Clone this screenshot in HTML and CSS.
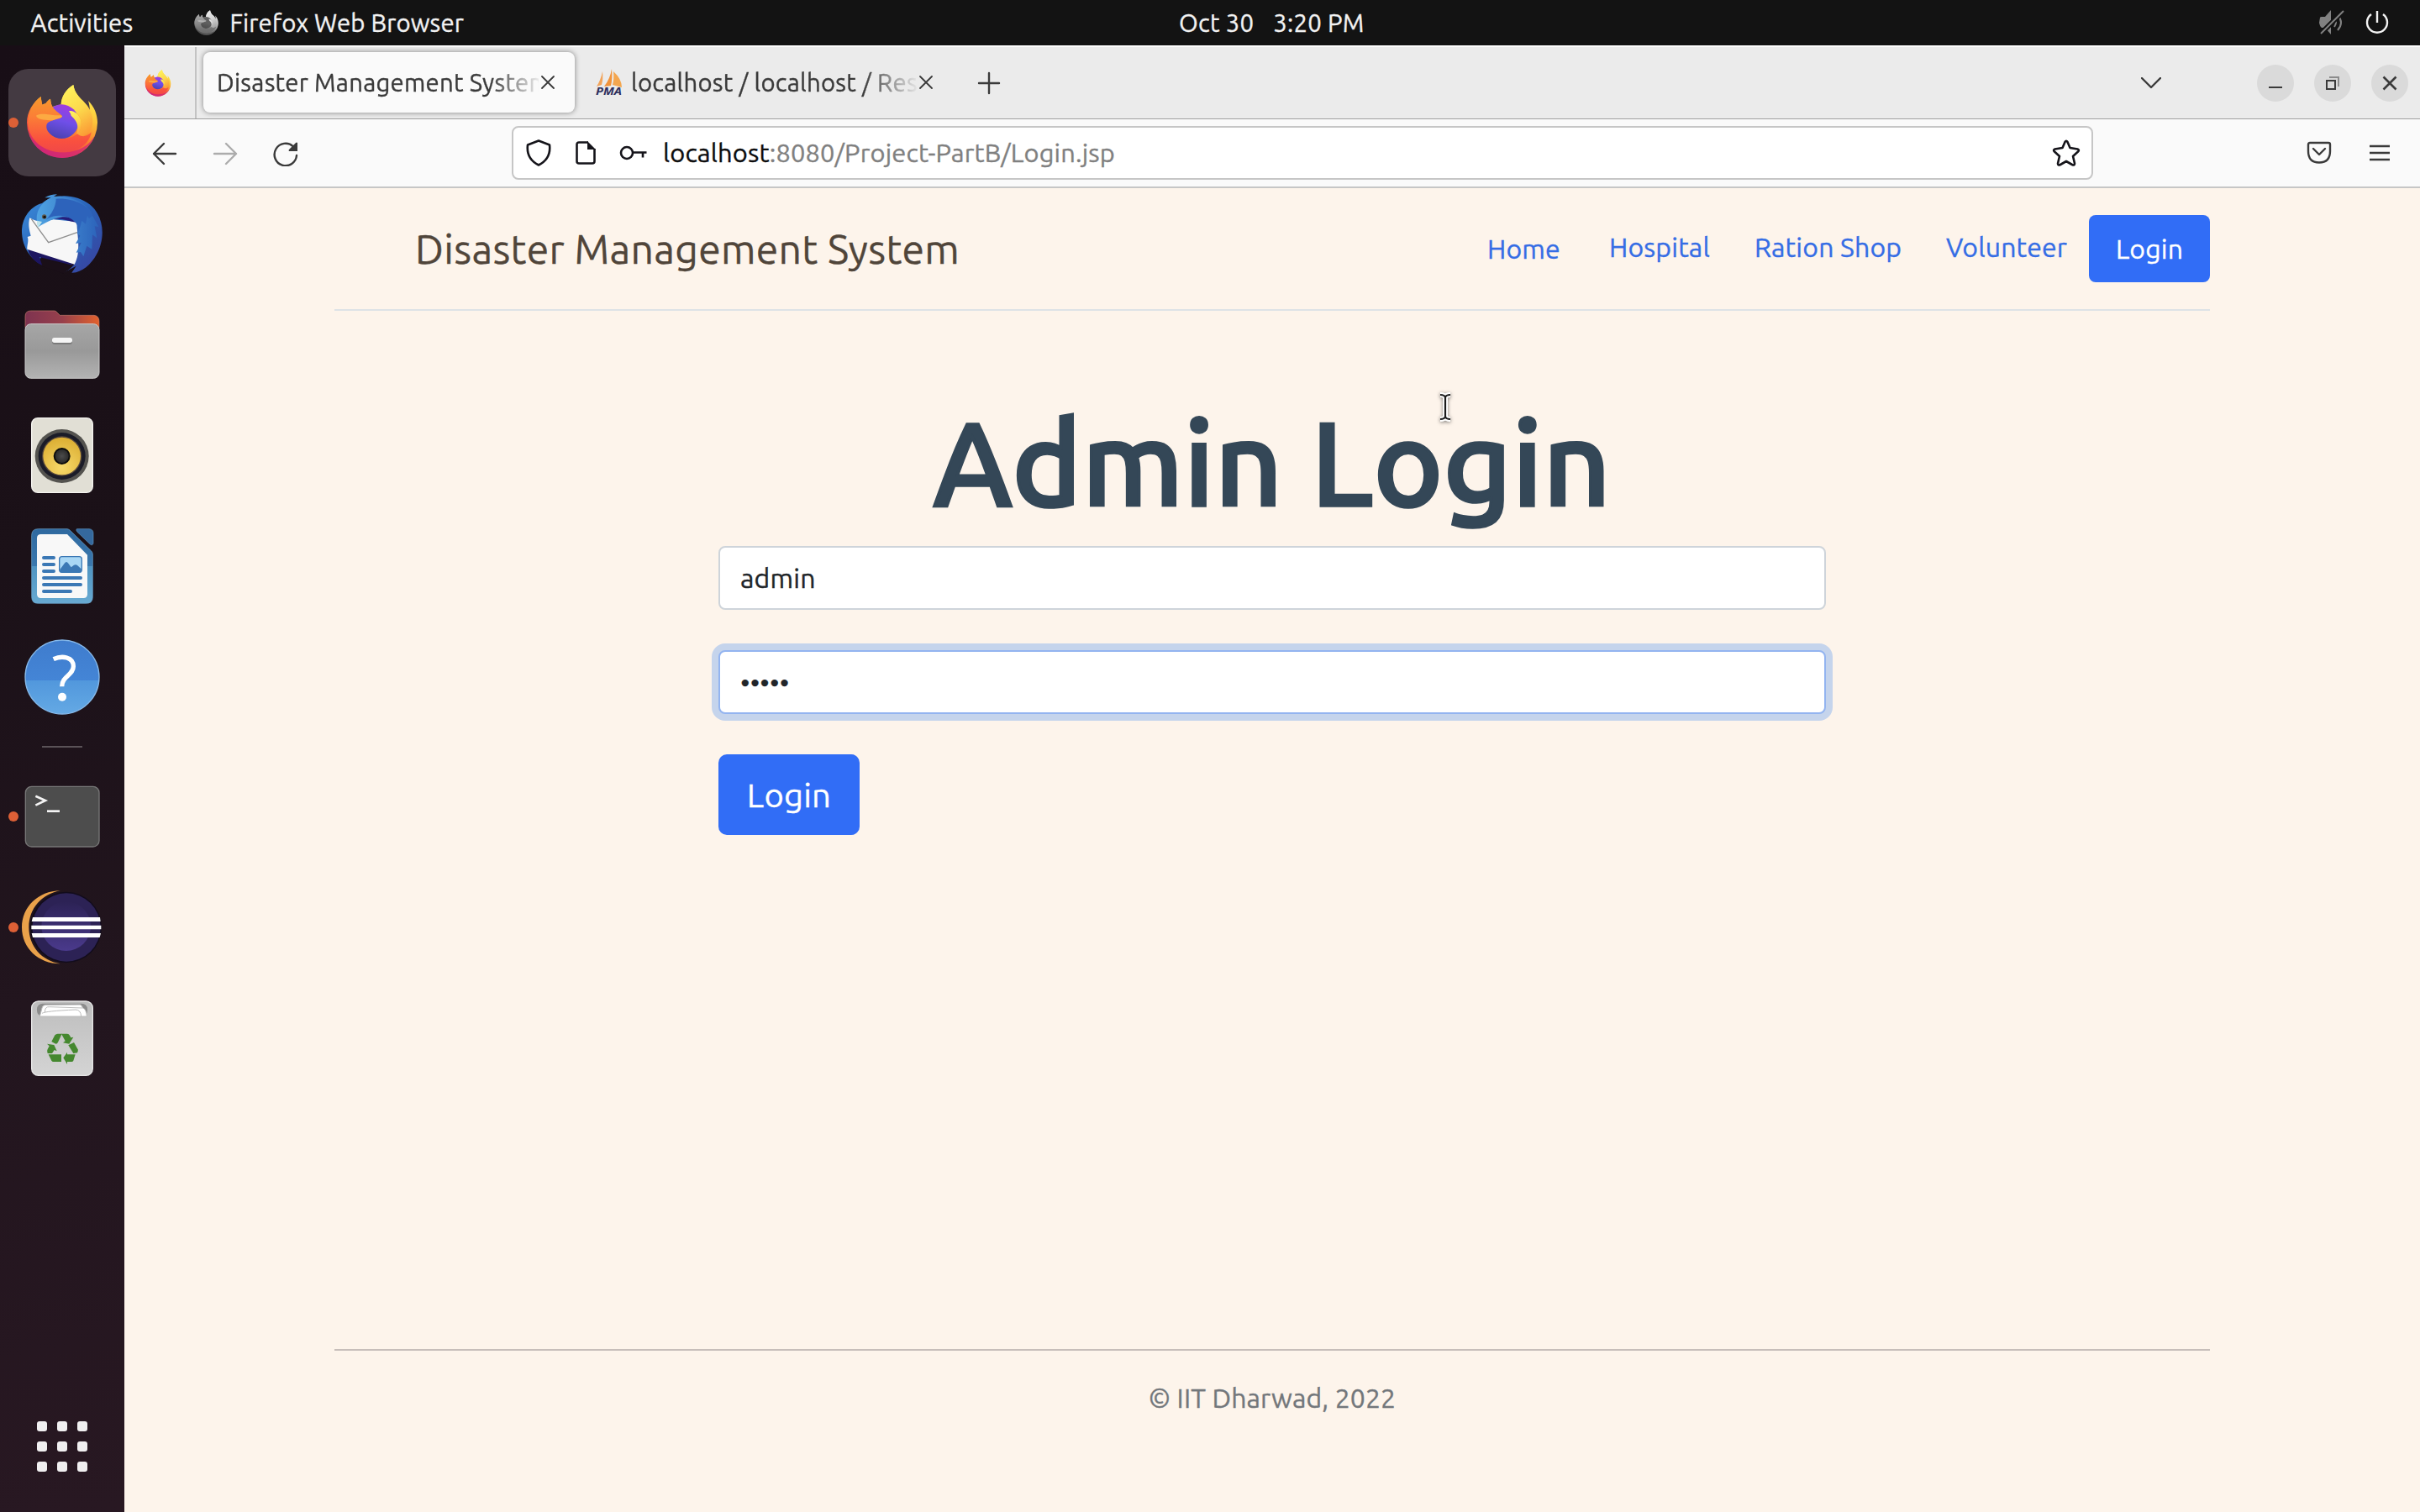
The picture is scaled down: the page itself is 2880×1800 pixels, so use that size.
FILE: index.html
```
<!DOCTYPE html>
<html lang="en">
<head>
<meta charset="utf-8">
<title>Disaster Management System</title>
<link rel="stylesheet" href="styles.css">
</head>
<body>
<svg class="defs" aria-hidden="true">
  <defs>
    <linearGradient id="fxBody" x1=".85" y1=".1" x2=".35" y2="1">
      <stop offset="0" stop-color="#fff04f"/><stop offset=".3" stop-color="#fcc43a"/><stop offset=".55" stop-color="#fb8430"/><stop offset=".78" stop-color="#f5483f"/><stop offset="1" stop-color="#c9217c"/>
    </linearGradient>
    <linearGradient id="fxFlame" x1=".3" y1="0" x2=".7" y2="1">
      <stop offset="0" stop-color="#fff25b"/><stop offset=".5" stop-color="#fcd94c"/><stop offset="1" stop-color="#fb9a35"/>
    </linearGradient>
    <linearGradient id="fxHead" x1="0" y1="0" x2="0" y2="1">
      <stop offset="0" stop-color="#f59a2b"/><stop offset=".35" stop-color="#fb7f36"/><stop offset=".8" stop-color="#f9503f"/><stop offset="1" stop-color="#f04848"/>
    </linearGradient>
    <linearGradient id="fxGlobe" x1=".7" y1="0" x2=".4" y2="1">
      <stop offset="0" stop-color="#a43be0"/><stop offset=".5" stop-color="#6f4fe8"/><stop offset="1" stop-color="#4a42b0"/>
    </linearGradient>
    <linearGradient id="tbBlue" x1="0" y1="0" x2="1" y2="1">
      <stop offset="0" stop-color="#3b8fdc"/><stop offset=".5" stop-color="#2a62b8"/><stop offset="1" stop-color="#3a3f9c"/>
    </linearGradient>
    <linearGradient id="tbHead" x1="0" y1="0" x2="1" y2="0">
      <stop offset="0" stop-color="#4fa3e2"/><stop offset="1" stop-color="#2c63ba"/>
    </linearGradient>
    <linearGradient id="folderBack" x1="0" y1="0" x2="1" y2="0">
      <stop offset="0" stop-color="#7e3350"/><stop offset=".5" stop-color="#97404c"/><stop offset="1" stop-color="#e2622e"/>
    </linearGradient>
    <linearGradient id="folderFront" x1="0" y1="0" x2="0" y2="1">
      <stop offset="0" stop-color="#a6a6a6"/><stop offset=".5" stop-color="#999"/><stop offset="1" stop-color="#b3b3b3"/>
    </linearGradient>
    <radialGradient id="cone" cx=".5" cy=".8" r=".8">
      <stop offset="0" stop-color="#f6d96a"/><stop offset="1" stop-color="#dcae32"/>
    </radialGradient>
    <radialGradient id="cap"><stop offset="0" stop-color="#4c4c4c"/><stop offset="1" stop-color="#2b2b2b"/></radialGradient>
    <linearGradient id="writer" x1="0" y1="0" x2="0" y2="1">
      <stop offset="0" stop-color="#2f699f"/><stop offset=".5" stop-color="#3a78ae"/><stop offset=".5" stop-color="#4f94c2"/><stop offset="1" stop-color="#68aad2"/>
    </linearGradient>
    <linearGradient id="help" x1="0" y1="0" x2="0" y2="1">
      <stop offset="0" stop-color="#3f7ccd"/><stop offset=".54" stop-color="#4485d6"/><stop offset=".54" stop-color="#5197dc"/><stop offset="1" stop-color="#64a9e4"/>
    </linearGradient>
    <linearGradient id="moon" x1="0" y1="0" x2="0" y2="1">
      <stop offset="0" stop-color="#2c2255"/><stop offset="1" stop-color="#4a3a8c"/>
    </linearGradient>
    <linearGradient id="trash" x1="0" y1="0" x2="0" y2="1">
      <stop offset="0" stop-color="#bdbdbd"/><stop offset="1" stop-color="#d4d4d4"/>
    </linearGradient>
    <symbol id="firefox" viewBox="94 92 256 264">
      <path fill="url(#fxBody)" d="M146 135C147 146 149 156 151 164Q157 161 163 160C167 153 173 147 180 143C181 154 183 164 187 171L218 163C219 136 234 110 262 93C266 121 281 135 296 150C309 163 318 174 320 184C321 172 318 160 315 150C337 171 348 200 348 228A126 126 0 0 1 96 228C96 190 118 155 146 135Z"/>
      <path fill="#d12a76" opacity=".75" d="M104 272A126 126 0 0 0 340 272C312 320 268 334 222 334C170 334 126 312 104 272Z"/>
      <path fill="url(#fxFlame)" d="M218 163C219 136 234 110 262 93C266 121 281 135 296 150C322 177 334 206 330 232C326 264 300 284 268 280C288 262 294 240 290 222C286 204 276 192 262 186L248 176Z"/>
      <circle cx="220" cy="224" r="61" fill="url(#fxGlobe)"/>
      <path fill="url(#fxFlame)" d="M246 187C262 183 277 195 285 211C296 235 290 264 268 279C279 258 280 241 272 225C266 213 258 208 254 203Q252 194 246 187Z"/>
      <path fill="url(#fxHead)" d="M146 135C147 146 149 156 151 164Q157 161 163 160C167 153 173 147 180 143C181 156 184 167 190 175C200 189 215 196 222 204C222 213 209 213 198 217C184 222 168 224 166 238C163 262 190 286 221 286C246 286 264 277 276 268C292 282 312 278 326 262C318 310 270 334 222 334C160 334 110 296 100 240C96 200 118 155 146 135Z"/>
      <path fill="#fcb144" opacity=".85" d="M129 203C142 194 166 198 190 201C204 203 218 200 222 205C220 212 207 213 194 218C178 222 160 218 146 216C136 213 131 209 129 203Z"/>
    </symbol>
  </defs>
</svg>

<div class="desktop">
  <header class="topbar">
    <span class="activities">Activities</span>
    <span class="app-menu">
      <svg class="app-icon"><use href="#firefox"/></svg>
      <span class="app-name">Firefox Web Browser</span>
    </span>
    <span class="clock"><span>Oct 30</span><span>3:20 PM</span></span>
    <span class="status">
      <svg width="30" height="30" viewBox="0 0 30 30" fill="none" stroke="#828282" stroke-width="2">
        <path fill="#828282" stroke="none" d="M1 9Q1 8 3 8H7L14 0V29L7 21H3Q1 20 0 15Z"/>
        <path d="M18 10Q22 14 18 20M22 6Q30 15 22 24"/>
        <path stroke="#131313" stroke-width="6" d="M2 28L29 1"/><path stroke-width="2" d="M2 28L29 1"/>
      </svg>
      <svg width="28" height="30" viewBox="0 0 28 30" fill="none" stroke="#f2f2f2" stroke-width="2.4">
        <path d="M7 5A12 12 0 1 0 21 5M14 1V15"/>
      </svg>
    </span>
  </header>

  <div class="workspace">
    <nav class="dock">
      <div class="dock-item active"><i class="running"></i>
        <svg viewBox="0 30 444 396"><use href="#firefox" x="94" y="92" width="256" height="264"/></svg></div>
      <div class="dock-item"><svg viewBox="0 426 444 396">
        <path fill="url(#tbBlue)" d="M150 516C190 480 270 480 320 520C372 562 378 640 344 700C325 735 290 766 256 764L272 740L225 764Q250 752 262 736L155 738C110 720 76 670 78 610C80 566 110 526 150 516Z"/>
        <path fill="#1a0f18" d="M140 728Q150 736 160 742L225 766Q250 752 266 734L200 712L150 700Z"/>
        <path fill="#1c1560" d="M100 680C104 705 130 732 155 738L140 708L262 738L220 690Z"/>
        <path fill="#1a0f18" d="M142 712L256 740Q240 758 225 766L152 742Z"/>
        <path fill="#f7f7f7" d="M106 568C140 590 160 578 190 574L274 582C276 640 290 690 266 734L97 680C96 665 104 650 98 636L110 632C104 610 100 590 106 568Z"/>
        <path fill="none" stroke="#8f8f8f" stroke-width="4" d="M112 572L173 656L276 620"/>
        <path fill="#251e7c" d="M182 574C214 552 260 556 272 584C246 582 220 566 182 574Z"/>
        <path fill="url(#tbHead)" d="M132 578C126 546 150 510 182 496L160 496Q180 484 204 484L192 492C250 486 320 520 330 560L352 600L338 598L346 640L330 628L328 680L310 668L298 706L288 690L272 692L290 656L270 660L286 632L276 624C290 590 260 558 216 566C180 574 160 586 138 600Z"/>
        <path fill="#2d63bb" d="M200 500C260 494 326 528 330 560L318 570L312 560L306 590L292 578L280 622C286 590 256 560 210 560C180 562 170 570 162 577C190 550 200 520 200 500Z"/>
        <path fill="#bfe3ea" d="M132 578L150 582L136 604Q130 592 132 578Z"/>
        <circle cx="158" cy="564" r="8" fill="#5d5647"/><circle cx="159" cy="565" r="5" fill="#111"/>
      </svg></div>
      <div class="dock-item"><svg viewBox="0 822 444 396">
        <path fill="url(#folderBack)" stroke="#c07a6a" stroke-width="2" d="M90 960V920Q90 900 110 900H194Q200 900 204 906L214 916H336Q354 918 354 938V960Z"/>
        <rect x="90" y="947" width="264" height="194" rx="20" fill="url(#folderFront)" stroke="#c9c9c9" stroke-width="3"/>
        <rect x="186" y="1000" width="72" height="20" rx="9" fill="#7a7a7a"/>
        <rect x="186" y="996" width="72" height="18" rx="8" fill="#f5f5f5"/>
      </svg></div>
      <div class="dock-item"><svg viewBox="0 18 444 396">
        <rect x="113" y="83" width="218" height="266" rx="22" fill="#e1dfd5" stroke="#f4f3ef" stroke-width="4"/>
        <circle cx="221" cy="219" r="96" fill="#54534f"/><circle cx="221" cy="219" r="84" fill="#1b1c28"/>
        <circle cx="221" cy="219" r="71" fill="#5a4a3c"/><circle cx="221" cy="219" r="67" fill="url(#cone)"/>
        <circle cx="221" cy="219" r="30" fill="#0b0b0b"/><circle cx="221" cy="219" r="24" fill="url(#cap)"/>
      </svg></div>
      <div class="dock-item"><svg viewBox="0 414 444 396">
        <path fill="url(#writer)" stroke="#6da6cf" stroke-width="2" d="M136 479H240Q246 480 250 484L326 558Q331 563 331 570V722Q331 745 308 745H136Q113 745 113 722V502Q113 479 136 479Z"/>
        <path fill="#35699e" stroke="#5b91bd" stroke-width="2" d="M274 479H318Q333 480 333 494V530Q331 540 322 534L276 490Q270 482 274 479Z"/>
        <path fill="#f8f8f8" d="M146 498H240L312 572V712Q312 726 298 726H146Q132 726 132 712V512Q132 498 146 498Z"/>
        <path stroke="#3b78b5" stroke-width="12" stroke-linecap="round" d="M156 582H192M156 606H192M156 630H192M156 654H288M156 678H288M156 702H252"/>
        <rect x="212" y="578" width="80" height="56" rx="9" fill="#a9d7f5" stroke="#3b78b5" stroke-width="4"/>
        <path fill="#3b78b5" d="M214 624L230 602Q237 592 244 602L254 616L264 608Q271 604 277 610L290 622V634H214Z"/>
      </svg></div>
      <div class="dock-item"><svg viewBox="0 810 444 396">
        <circle cx="222" cy="1008" r="132" fill="url(#help)" stroke="#86b9ea" stroke-width="4"/>
        <path fill="none" stroke="#fff" stroke-width="16" d="M191 944C222 930 262 936 262 970C262 1002 221 1004 221 1042"/>
        <circle cx="222" cy="1079" r="15" fill="#fff"/>
      </svg></div>
      <div class="dock-separator"></div>
      <div class="dock-item"><i class="running"></i><svg viewBox="0 108 444 396">
        <rect x="91" y="199" width="263" height="215" rx="22" fill="#4d4d4d" stroke="#777" stroke-width="4"/>
        <path fill="none" stroke="#f4f4f4" stroke-width="8" d="M127 233L162 249L127 266"/><path stroke="#f4f4f4" stroke-width="8" d="M168 287H213"/>
      </svg></div>
      <div class="dock-item"><i class="running"></i><svg viewBox="0 504 444 396">
        <path fill="#e9a14a" d="M216 571C135 572 78 630 78 702S135 832 216 832C150 822 103 770 103 702S150 582 216 571Z"/>
        <circle cx="236" cy="702" r="127" fill="#120c1c"/><circle cx="237" cy="702" r="122" fill="#2c2255"/>
        <circle cx="236" cy="698" r="88" fill="url(#moon)"/>
        <path fill="#fff" d="M117 666H357L359 681H113ZM112 695H361V709H112ZM113 723H360L356 738H117Z"/>
      </svg></div>
      <div class="dock-item"><svg viewBox="0 900 444 396">
        <rect x="113" y="966" width="218" height="265" rx="24" fill="url(#trash)" stroke="#e6e6e6" stroke-width="4"/>
        <rect x="132" y="974" width="180" height="46" rx="20" fill="#8b8b8b"/>
        <path fill="#fff" stroke="#bbb" stroke-width="3" d="M142 1020L150 990Q152 979 164 979L286 978Q292 980 296 990Q308 994 310 1020Z"/>
        <path fill="none" stroke="#bbb" stroke-width="3" d="M160 1006Q160 984 176 986L296 990M150 1009Q160 1001 270 996Q288 996 290 1020"/>
        <g fill="#45882f">
          <path d="M196 1087Q200 1082 206 1082H221L207 1112Q203 1121 196 1117L184 1110Z"/>
          <path d="M219 1082H240Q246 1082 249 1088L253 1096L262 1094L247 1118L225 1114L233 1108Z"/>
          <path d="M244 1123L264 1113L278 1138Q280 1144 276 1150L262 1152Z"/>
          <path d="M269 1156H240V1148L226 1168L240 1191V1182H256Q260 1182 262 1178Z"/>
          <path d="M173 1156H219V1182H190Q186 1182 184 1178Z"/>
          <path d="M168 1118L193 1122L203 1144L194 1140L186 1152L170 1152Q166 1144 170 1137L176 1126Z"/>
        </g>
      </svg></div>
      <div class="apps-grid"><i></i><i></i><i></i><i></i><i></i><i></i><i></i><i></i><i></i></div>
    </nav>

    <main class="browser">
      <div class="tabstrip">
        <div class="pinned"><svg class="favicon"><use href="#firefox"/></svg></div>
        <div class="tab selected">
          <span class="tab-label">Disaster Management System</span>
          <svg class="tab-close" viewBox="0 0 16 16"><path d="M1 1L15 15M15 1L1 15"/></svg>
        </div>
        <div class="tab second">
          <svg class="pma" viewBox="0 0 32 32">
            <path fill="#f2a45a" d="M8 3Q9 12 7 19L1 21Q6 13 8 3Z"/><path fill="#f0933c" d="M19 0Q20 12 18 20L10 21Q17 12 19 0Z"/><path fill="#f4a64f" d="M21 3Q31 12 31 22L20 19Q22 12 21 3Z"/>
            <text x="0" y="31" class="pma-text" textLength="31" lengthAdjust="spacingAndGlyphs">PMA</text>
          </svg>
          <span class="tab-label">localhost / localhost / Resources</span>
          <svg class="tab-close" viewBox="0 0 16 16"><path d="M1 1L15 15M15 1L1 15"/></svg>
        </div>
        <svg class="new-tab" viewBox="0 0 24 24"><path d="M12 0V24M0 12H24"/></svg>
        <svg class="all-tabs" viewBox="0 0 24 14"><path d="M1 1L12 12L23 1"/></svg>
        <div class="window-buttons">
          <span><svg viewBox="0 0 44 44"><path d="M14 27H30"/></svg></span>
          <span><svg viewBox="0 0 44 44"><path stroke="#8c8c8c" d="M18 15H29V26"/><rect x="15" y="19" width="10" height="10"/></svg></span>
          <span><svg viewBox="0 0 44 44"><path stroke-width="2.6" d="M14.500 14.500L29.500 29.500M29.500 14.500L14.500 29.500"/></svg></span>
        </div>
      </div>

      <div class="toolbar">
        <div class="nav-buttons">
          <svg viewBox="0 0 30 30"><path d="M28 15H2M14 3L2 15L14 27"/></svg>
          <svg class="disabled" viewBox="0 0 30 30"><path d="M2 15H28M16 3L28 15L16 27"/></svg>
          <svg viewBox="0 0 30 30"><path d="M28 17A13.200 13.200 0 1 1 24 6.500"/><path fill="#3a3a3a" stroke="none" d="M29 2V12H19Q18 11 19 10L27 2Q28 1 29 2Z"/></svg>
        </div>
        <div class="urlbar">
          <svg width="32" height="34" viewBox="0 0 32 34"><path d="M16 2.500L29 7.500Q31 24 16 31.500Q1 24 3 7.500Z"/></svg>
          <svg width="24" height="30" viewBox="0 0 24 30"><path d="M15 2.500H4Q1.500 2.500 1.500 5V25Q1.500 27.500 4 27.500H20Q22.500 27.500 22.500 25V10"/><path fill="#15141a" stroke="none" d="M14 1L24 11H14Z"/></svg>
          <svg width="34" height="18" viewBox="0 0 34 18"><circle cx="9" cy="9" r="7"/><path d="M16 8.500H32.500M28 8.500V14.500"/></svg>
          <span class="url"><b>localhost</b>:8080/Project-PartB/Login.jsp</span>
          <svg class="star" width="34" height="32" viewBox="0 0 34 32"><path d="M15.500 3Q17 0.500 18.500 3L21.500 10L30.500 11.500Q33 12.500 31 14.500L25 20L27 28.500Q27 31.500 24 30L17 26L10 30Q7 31.500 7 28.500L9 20L3 14.500Q1 12.500 3.500 11.500L12.500 10Z"/></svg>
        </div>
        <svg class="pocket" width="30" height="28" viewBox="0 0 30 28"><path d="M4 2H26Q28 2 28 4V12Q28 25.500 15 25.500Q2 25.500 2 12V4Q2 2 4 2ZM8 9L15 16L22 9"/></svg>
        <svg class="menu" width="24" height="20" viewBox="0 0 24 20"><path d="M0 2H24M0 10H24M0 18H24"/></svg>
      </div>

      <div class="page">
        <header class="site-header">
          <a class="brand">Disaster Management System</a>
          <nav class="site-nav">
            <a class="home">Home</a><a class="hospital">Hospital</a><a class="ration">Ration Shop</a><a class="volunteer">Volunteer</a><a class="login-link">Login</a>
          </nav>
        </header>
        <h1 class="title">Admin Login</h1>
        <form class="login-form">
          <div class="field">admin</div>
          <div class="field focused"><span class="dots">•••••</span></div>
          <button type="button" class="submit">Login</button>
        </form>
        <footer class="site-footer">© IIT Dharwad, 2022</footer>
      </div>
    </main>
  </div>

  <svg class="cursor" viewBox="0 0 18 38">
    <path d="M3 4Q8 4 9 7Q10 4 15 4M9 6V31M3 33Q8 33 9 30Q10 33 15 33" stroke="#fff" stroke-width="6"/>
    <path d="M3 4Q8 4 9 7Q10 4 15 4M9 6V31M3 33Q8 33 9 30Q10 33 15 33" stroke="#1b1b1b" stroke-width="2.200"/>
  </svg>
</div>
</body>
</html>
```
FILE: styles.css
```
* { box-sizing: border-box; }
body {
  margin: 0;
  width: 2880px;
  height: 1800px;
  overflow: hidden;
  font-family: Ubuntu, "Noto Sans", sans-serif;
  font-size: 32px;
  -webkit-text-stroke: .35px currentColor;
}
svg { display: block; flex: none; }
.defs { position: absolute; width: 0; height: 0; }
.desktop { position: relative; display: flex; flex-direction: column; height: 1800px; }

/* GNOME top bar */
.topbar {
  display: flex;
  align-items: center;
  height: 54px;
  background: #131313;
  color: #f2f2f2;
  font-size: 29.33px;
  line-height: 55px;
  white-space: nowrap;
}
.activities { width: 195px; padding-left: 36.5px; letter-spacing: .15px; }
.app-menu { display: flex; align-items: center; width: 1166px; padding-left: 36px; gap: 13.5px; letter-spacing: .15px; }
.app-icon { width: 29px; height: 30px; filter: grayscale(1); }
.clock { display: flex; gap: 23px; margin-left: 42px; letter-spacing: .25px; }
.status { display: flex; align-items: center; gap: 25px; margin-left: auto; padding-right: 37px; }

.workspace { display: flex; flex: 1; }

/* Dock */
.dock {
  display: flex;
  flex-direction: column;
  width: 148px;
  padding-top: 26px;
  background: linear-gradient(170deg, #180e16 0%, #1b1118 35%, #22151e 65%, #281822 100%);
}
.dock-item { position: relative; width: 148px; height: 132px; }
.dock-item svg { position: relative; width: 148px; height: 132px; }
.dock-item.active::before {
  content: "";
  position: absolute;
  inset: 2px 10px;
  border-radius: 24px;
  background: #443a42;
}
.running { position: absolute; left: 10px; top: 60px; width: 12px; height: 12px; border-radius: 50%; background: #dd6036; }
.dock-item.active .running { z-index: 1; }
.dock-separator { width: 48px; height: 2px; margin: 16px 50px; background: #5a5257; }
.apps-grid {
  display: grid;
  grid-template-columns: repeat(3, 12px);
  gap: 12px;
  margin: auto 0 48px 44px;
}
.apps-grid i { height: 12px; border-radius: 3px; background: #f0eff0; }

/* Browser chrome */
.browser { display: flex; flex-direction: column; flex: 1; min-width: 0; }
.tabstrip {
  display: flex;
  align-items: center;
  height: 88px;
  border-top: 2px solid #fdfdfd;
  border-bottom: 1px solid #9f9f9f;
  background: #ebebeb;
  color: #3a3a3a;
  font-size: 29.33px;
}
.tabstrip svg, .nav-buttons svg, .pocket, .menu { fill: none; stroke: #3a3a3a; stroke-width: 2.4; stroke-linecap: round; stroke-linejoin: round; }
.tabstrip .favicon, .tabstrip .pma { stroke: none; fill: none; }
.pinned { display: flex; align-items: center; width: 86px; height: 85px; padding-left: 24px; border-right: 2px solid #c3c3c3; }
.favicon { width: 32px; height: 32px; }
.tab { display: flex; align-items: center; height: 72px; margin-top: -1px; }
.tab.selected {
  width: 442px;
  margin-left: 8px;
  padding-left: 16px;
  border-radius: 8px;
  background: #fafafa;
  box-shadow: 0 0 6px rgba(0, 0, 0, .45);
}
.tab-label { overflow: hidden; white-space: nowrap; line-height: 73px; letter-spacing: .25px; }
.selected .tab-label { width: 383px; -webkit-mask: linear-gradient(90deg, #000 325px, transparent 388px); mask: linear-gradient(90deg, #000 325px, transparent 388px); }
.tab-close { width: 16px; height: 16px; }
.selected .tab-close { margin-left: 3px; }
.tabstrip .tab-close { stroke-width: 1.8; }
.tab.second { width: 426px; margin-left: 25px; }
.pma { width: 32px; height: 32px; margin-right: 10px; overflow: visible; }
.pma-text { font: italic 700 13px "Open Sans", sans-serif; fill: #2e2f5c; -webkit-text-stroke: 0; }
.second .tab-label { width: 341px; -webkit-mask: linear-gradient(90deg, #000 276px, transparent 343px); mask: linear-gradient(90deg, #000 276px, transparent 343px); }
.second .tab-close { margin-left: 2px; }
.new-tab { width: 24px; height: 24px; margin-left: 30px; overflow: visible; }
.all-tabs { width: 24px; height: 14px; margin-left: 1359px; }
.window-buttons { display: flex; gap: 24px; margin-left: 114px; }
.window-buttons span { width: 44px; height: 44px; border-radius: 50%; background: #dadada; }
.tabstrip .window-buttons svg { width: 44px; height: 44px; stroke-width: 2; stroke-linecap: butt; stroke-linejoin: miter; }

.toolbar {
  display: flex;
  align-items: center;
  height: 82px;
  padding-left: 33px;
  border-bottom: 2px solid #c6c6c6;
  background: #fafafa;
}
.nav-buttons { display: flex; gap: 42px; margin-top: 2px; width: 428px; }
.nav-buttons svg { width: 30px; height: 30px; }
.nav-buttons svg.disabled { opacity: .4; }
.urlbar {
  display: flex;
  align-items: center;
  width: 1882px;
  height: 64px;
  padding-left: 14px;
  border: 2px solid #c6c6c6;
  border-radius: 8px;
  background: #fff;
}
.urlbar svg { fill: none; stroke: #15141a; stroke-width: 2.6; stroke-linejoin: round; margin-right: 28px; }
.urlbar svg:nth-child(3) { margin-right: 18px; }
.url { flex: 1; color: #808080; font-size: 30.8px; line-height: 60px; letter-spacing: .16px; }
.url b { font-weight: 400; color: #0c0c0d; }
.urlbar .star { margin-right: 13px; }
.pocket { margin-left: 254px; }
.menu { margin-left: 45px; }
.menu { stroke-linecap: butt; }

/* Login page */
.page {
  display: flex;
  flex-direction: column;
  flex: 1;
  padding: 0 250px;
  background: #fdf4eb;
}
.site-header {
  display: flex;
  align-items: center;
  justify-content: space-between;
  height: 146px;
  border-bottom: 2px solid #dee2e6;
  white-space: nowrap;
}
.brand { padding-left: 96px; color: #50453a; font-size: 48px; letter-spacing: .34px; }
.site-nav { display: flex; align-items: center; height: 80px; color: #356de5; line-height: 80px; letter-spacing: .15px; }
.home { width: 145px; }
.hospital { width: 173px; }
.ration { width: 228px; }
.volunteer { width: 170px; }
.hospital, .ration, .volunteer { padding-bottom: 4px; }
.login-link { width: 144px; height: 80px; border-radius: 8px; background: #316df6; color: #fff; text-align: center; }
.title {
  margin: 96px 0 16px;
  color: #344757;
  font-size: 140px;
  font-weight: 500;
  line-height: 168px;
  letter-spacing: .5px;
  text-align: center;
  -webkit-text-stroke-width: 3.6px;
}
.login-form { display: flex; flex-direction: column; align-items: flex-start; gap: 48px; width: 1318px; margin: 0 auto; }
.field {
  width: 1318px;
  height: 76px;
  padding: 0 24px;
  border: 2px solid #ced4da;
  border-radius: 8px;
  background: #fff;
  color: #212529;
  line-height: 73px;
  letter-spacing: .15px;
}
.field.focused { border-color: #93b4f0; box-shadow: 0 0 0 8px #c5d4ec; }
.submit {
  width: 168px;
  height: 96px;
  padding: 0;
  border: 0;
  border-radius: 10px;
  background: #316df6;
  color: #fff;
  font: 40px/97px Ubuntu, "Noto Sans", sans-serif;
  letter-spacing: .2px;
}
.site-footer {
  height: 194px;
  margin-top: auto;
  border-top: 2px solid #c7beba;
  color: #73777b;
  line-height: 113px;
  letter-spacing: .1px;
  text-align: center;
}

.cursor { position: absolute; left: 1711px; top: 466px; width: 18px; height: 38px; fill: none; filter: drop-shadow(0 1px 2px rgba(0, 0, 0, .5)); }
```
